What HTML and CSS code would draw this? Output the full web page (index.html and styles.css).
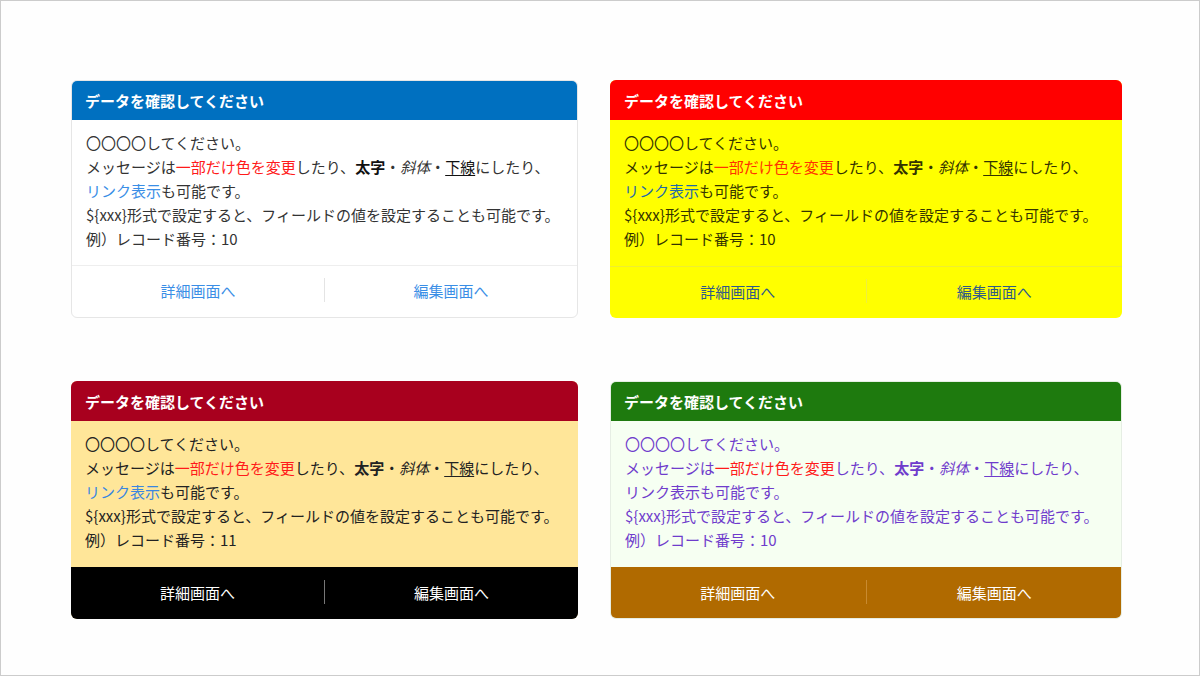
FILE: index.html
```html
<!DOCTYPE html>
<html lang="ja">
<head>
<meta charset="utf-8">
<link rel="stylesheet" href="styles.css">
</head>
<body>
<div class="frame">
  <div class="grid">
    <div class="card card-blue">
      <div class="card-head">データを確認してください</div>
      <div class="card-body">
        <p>〇〇〇〇してください。</p>
        <p>メッセージは<span class="red">一部だけ色を変更</span>したり、<b>太字</b>・<i>斜体</i>・<u>下線</u>にしたり、</p>
        <p><span class="link">リンク表示</span>も可能です。</p>
        <p>${xxx}形式で設定すると、フィールドの値を設定することも可能です。</p>
        <p>例）レコード番号：10</p>
      </div>
      <div class="card-foot">
        <span class="btn">詳細画面へ</span>
        <span class="sep"></span>
        <span class="btn">編集画面へ</span>
      </div>
    </div>

    <div class="card card-yellow">
      <div class="card-head">データを確認してください</div>
      <div class="card-body">
        <p>〇〇〇〇してください。</p>
        <p>メッセージは<span class="red">一部だけ色を変更</span>したり、<b>太字</b>・<i>斜体</i>・<u>下線</u>にしたり、</p>
        <p><span class="link">リンク表示</span>も可能です。</p>
        <p>${xxx}形式で設定すると、フィールドの値を設定することも可能です。</p>
        <p>例）レコード番号：10</p>
      </div>
      <div class="card-foot">
        <span class="btn">詳細画面へ</span>
        <span class="sep"></span>
        <span class="btn">編集画面へ</span>
      </div>
    </div>

    <div class="card card-wine">
      <div class="card-head">データを確認してください</div>
      <div class="card-body">
        <p>〇〇〇〇してください。</p>
        <p>メッセージは<span class="red">一部だけ色を変更</span>したり、<b>太字</b>・<i>斜体</i>・<u>下線</u>にしたり、</p>
        <p><span class="link">リンク表示</span>も可能です。</p>
        <p>${xxx}形式で設定すると、フィールドの値を設定することも可能です。</p>
        <p>例）レコード番号：11</p>
      </div>
      <div class="card-foot">
        <span class="btn">詳細画面へ</span>
        <span class="sep"></span>
        <span class="btn">編集画面へ</span>
      </div>
    </div>

    <div class="card card-green">
      <div class="card-head">データを確認してください</div>
      <div class="card-body">
        <p>〇〇〇〇してください。</p>
        <p>メッセージは<span class="red">一部だけ色を変更</span>したり、<b>太字</b>・<i>斜体</i>・<u>下線</u>にしたり、</p>
        <p><span class="link">リンク表示</span>も可能です。</p>
        <p>${xxx}形式で設定すると、フィールドの値を設定することも可能です。</p>
        <p>例）レコード番号：10</p>
      </div>
      <div class="card-foot">
        <span class="btn">詳細画面へ</span>
        <span class="sep"></span>
        <span class="btn">編集画面へ</span>
      </div>
    </div>
  </div>
</div>
</body>
</html>
```

FILE: styles.css
```css
html, body {
  margin: 0;
  padding: 0;
  background: #ffffff;
}
body {
  font-family: "Noto Sans CJK JP", "Noto Sans", sans-serif;
  font-size: 15px;
  color: #333333;
}
.frame {
  width: 1200px;
  height: 676px;
  box-sizing: border-box;
  border: 1px solid #cccccc;
  background: #fefefe;
}
.grid {
  display: grid;
  grid-template-columns: 507px 512px;
  grid-auto-rows: 238px;
  column-gap: 32px;
  row-gap: 63px;
  padding: 79px 0 0 70px;
}
.card {
  display: flex;
  flex-direction: column;
  border-radius: 6px;
  overflow: hidden;
  box-sizing: border-box;
}
.card-head {
  height: 40px;
  display: flex;
  align-items: center;
  padding: 0 14px;
  font-weight: bold;
  color: #ffffff;
  flex: none;
}
.card-body {
  padding: 11px 14px 13px;
  line-height: 24px;
  flex: 1;
}
.card-body p {
  margin: 0;
  white-space: nowrap;
}
.card-body b {
  font-weight: bold;
}
.card-body u {
  text-decoration: underline;
  text-underline-offset: 2px;
}
.card-foot {
  height: 52px;
  flex: none;
  display: flex;
  align-items: center;
  padding-bottom: 3px;
  box-sizing: border-box;
  border-top: 1px solid transparent;
}
.btn {
  flex: 1;
  text-align: center;
}
.sep {
  width: 1px;
  height: 24px;
  background: #e4e4e4;
}
.red {
  color: #ff1a1a;
}

/* blue */
.card-blue {
  border: 1px solid #e6e6e6;
  background: #ffffff;
}
.card-blue .card-head {
  background: #0070c0;
  margin: -1px -1px 0;
}
.card-blue .link { color: #3a8ee6; }
.card-blue .card-foot {
  border-top-color: #eeeeee;
}
.card-blue .btn { color: #3a8ee6; }
.card-blue b { color: #111; }
.card-blue u { color: #111; }

/* yellow */
.card-yellow {
  background: #ffff00;
}
.card-yellow .card-head { background: #ff0000; }
.card-yellow .card-body { color: #333300; }
.card-yellow .red { color: #ff3300; }
.card-yellow .link { color: #1f6aa8; }
.card-yellow .card-foot { border-top-color: #eeee30; }
.card-yellow .btn { color: #2f5a8a; }
.card-yellow .sep { background: #eeee40; }

/* wine */
.card-wine {
  background: #ffe699;
}
.card-wine .card-head { background: #a8001e; }
.card-wine .card-body { color: #222; }
.card-wine .link { color: #3a86e0; }
.card-wine .card-foot {
  background: #000000;
  color: #ffffff;
}
.card-wine .sep { background: #777777; }

/* green */
.card-green {
  background: #f6fff2;
  border: 1px solid #e6eee4;
}
.card-green .card-head {
  background: #1e7a0e;
  margin: -1px -1px 0;
}
.card-green .card-body { color: #6f3ccc; }
.card-green .link { color: #6f3ccc; }
.card-green .card-foot {
  background: #b06a00;
  color: #ffffff;
  margin: 0 -1px -1px;
}
.card-green .sep { background: #c88a30; }
```
